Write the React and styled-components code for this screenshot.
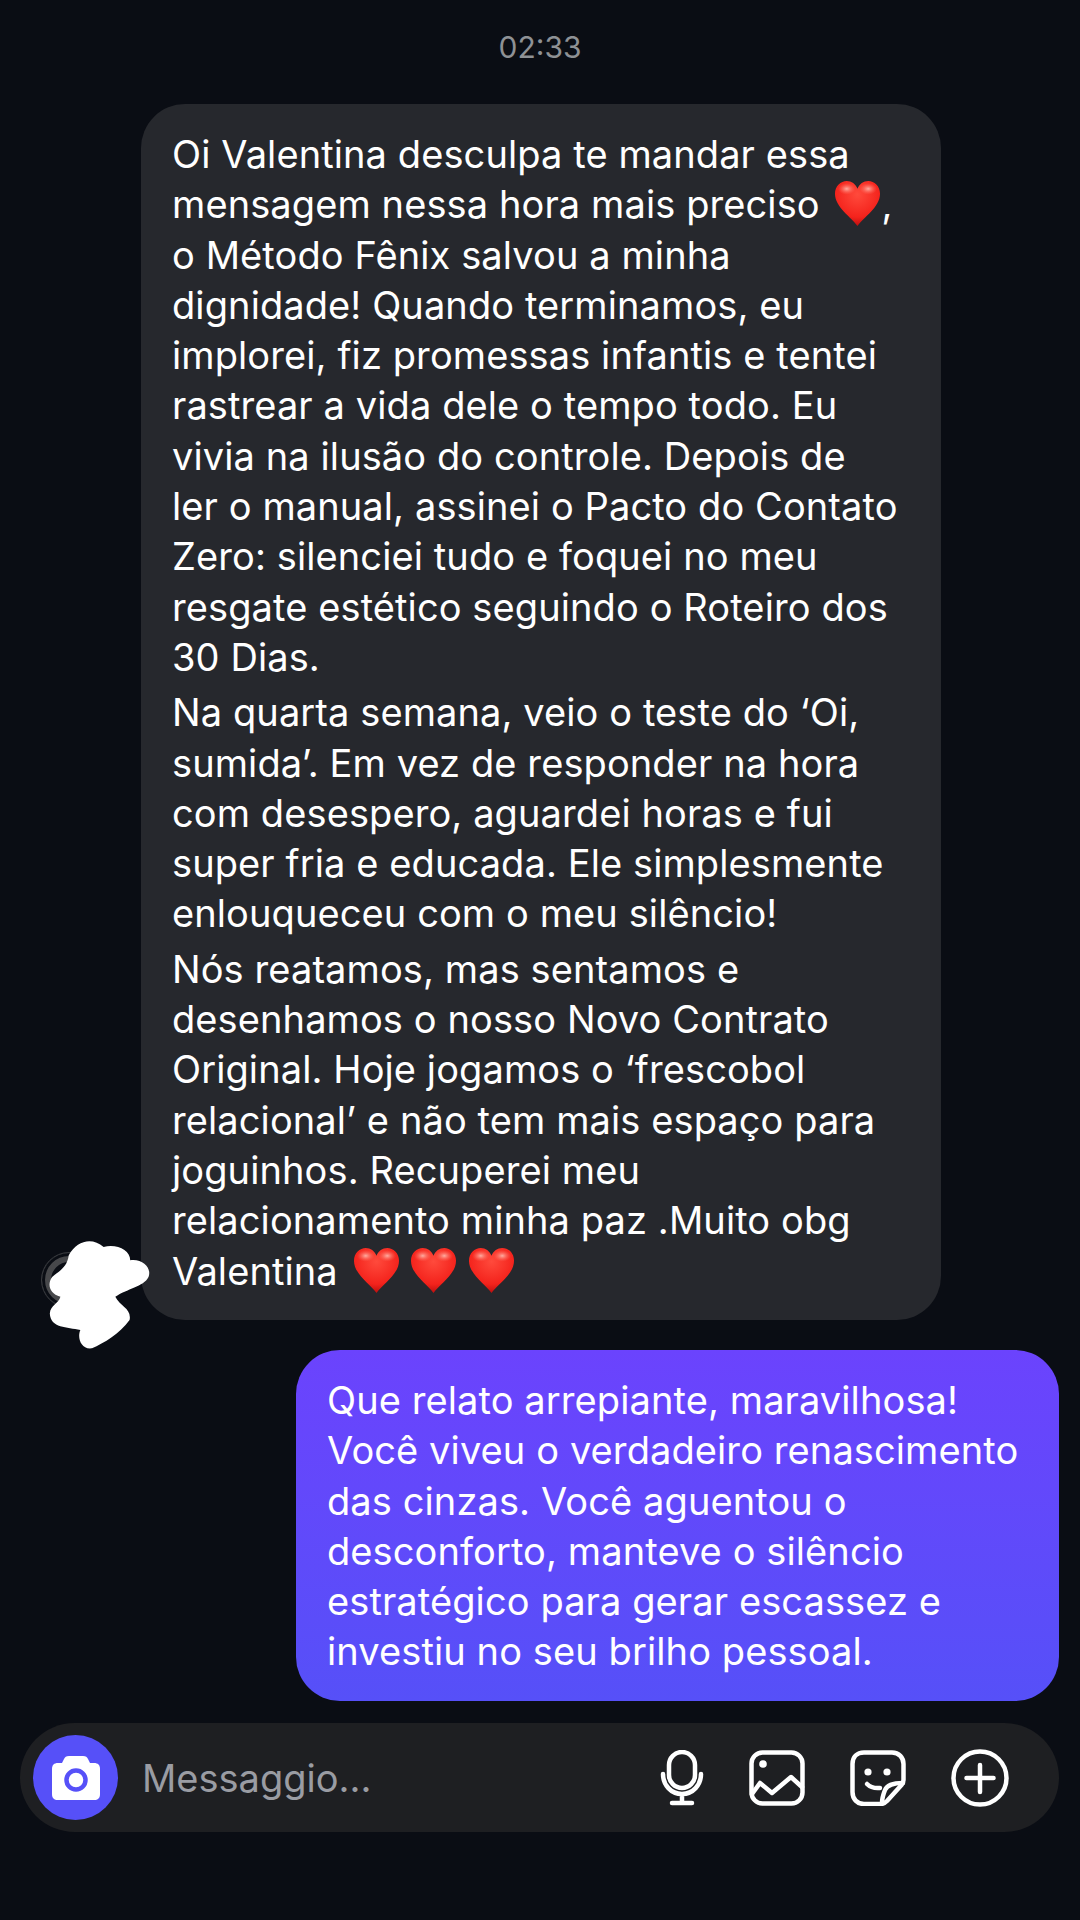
import styled, { createGlobalStyle } from 'styled-components'

const GlobalStyle = createGlobalStyle`
  html, body {
    margin: 0;
    padding: 0;
    background: #0a0d14;
  }
`

const received = [
  [
    'Oi Valentina desculpa te mandar essa',
    'mensagem nessa hora mais preciso @,',
    'o Método Fênix salvou a minha',
    'dignidade! Quando terminamos, eu',
    'implorei, fiz promessas infantis e tentei',
    'rastrear a vida dele o tempo todo. Eu',
    'vivia na ilusão do controle. Depois de',
    'ler o manual, assinei o Pacto do Contato',
    'Zero: silenciei tudo e foquei no meu',
    'resgate estético seguindo o Roteiro dos',
    '30 Dias.',
  ],
  [
    'Na quarta semana, veio o teste do ‘Oi,',
    'sumida’. Em vez de responder na hora',
    'com desespero, aguardei horas e fui',
    'super fria e educada. Ele simplesmente',
    'enlouqueceu com o meu silêncio!',
  ],
  [
    'Nós reatamos, mas sentamos e',
    'desenhamos o nosso Novo Contrato',
    'Original. Hoje jogamos o ‘frescobol',
    'relacional’ e não tem mais espaço para',
    'joguinhos. Recuperei meu',
    'relacionamento minha paz .Muito obg',
    'Valentina @ @ @',
  ],
]

const sent = [
  'Que relato arrepiante, maravilhosa!',
  'Você viveu o verdadeiro renascimento',
  'das cinzas. Você aguentou o',
  'desconforto, manteve o silêncio',
  'estratégico para gerar escassez e',
  'investiu no seu brilho pessoal.',
]

function Heart() {
  return (
    <HeartIcon viewBox="0 0 48 48">
      <defs>
        <radialGradient id="heartFill" cx="0.5" cy="0.3" r="0.72">
          <stop offset="0" stopColor="#ff4a3c" />
          <stop offset="0.7" stopColor="#f4231c" />
          <stop offset="1" stopColor="#b50d0e" />
        </radialGradient>
        <radialGradient id="heartShine" cx="0.5" cy="0.5" r="0.5">
          <stop offset="0" stopColor="#ffb4a8" stopOpacity="0.95" />
          <stop offset="1" stopColor="#ff6a5c" stopOpacity="0" />
        </radialGradient>
      </defs>
      <path
        fill="url(#heartFill)"
        d="M24 47C18 38 1 28 1 14 1 6 7 1 13 1c5 0 9 3 11 8 2-5 6-8 11-8 6 0 12 5 12 13 0 14-17 24-23 33z"
      />
      <ellipse cx="13" cy="9" rx="9" ry="6" fill="url(#heartShine)" />
      <ellipse cx="35" cy="9" rx="9" ry="6" fill="url(#heartShine)" />
    </HeartIcon>
  )
}

// '@' marks where a heart emoji sits in the line
function TextLine({ text }) {
  const parts = text.split('@')
  return (
    <Line>
      {parts.map((part, i) => (
        <span key={i}>
          {part}
          {i < parts.length - 1 && <Heart />}
        </span>
      ))}
    </Line>
  )
}

function Blob() {
  return (
    <BlobMark viewBox="80 170 315 340">
      <path
        fill="#fff"
        d="M145 225C170 180 215 170 250 200C290 190 330 210 330 240C370 235 395 265 385 290C370 320 320 325 285 350C300 380 335 385 328 420C300 460 250 490 215 505C180 510 170 470 180 450C140 440 90 445 88 400C90 375 115 370 120 350C85 340 80 310 95 290C120 270 140 260 145 225z"
      />
    </BlobMark>
  )
}

function App() {
  return (
    <Screen>
      <GlobalStyle />
      <Time>02:33</Time>
      <ReceivedRow>
        <Avatar />
        <Blob />
        <ReceivedBubble>
          {received.map((para, i) => (
            <Paragraph key={i}>
              {para.map((line) => (
                <TextLine key={line} text={line} />
              ))}
            </Paragraph>
          ))}
        </ReceivedBubble>
      </ReceivedRow>
      <SentRow>
        <SentBubble>
          {sent.map((line) => (
            <TextLine key={line} text={line} />
          ))}
        </SentBubble>
      </SentRow>
      <Composer>
        <CameraButton>
          <svg width="48" height="44" viewBox="0 0 48 44">
            <path
              fill="#fff"
              d="M17 0h14c3 0 4 1 5 3l2 4h4c4 0 6 2 6 6v25c0 4-2 6-6 6H6c-4 0-6-2-6-6V13c0-4 2-6 6-6h4l2-4c1-2 2-3 5-3z"
            />
            <circle cx="24" cy="24" r="9.5" fill="none" stroke="#5650f8" strokeWidth="4.5" />
          </svg>
        </CameraButton>
        <Placeholder>Messaggio...</Placeholder>
        <Actions>
          <svg width="44" height="56" viewBox="0 0 44 56" fill="none" stroke="#fff" strokeWidth="4.5" strokeLinecap="round">
            <rect x="9" y="2" width="26" height="36" rx="13" />
            <path d="M3 24c0 11 8 20 19 20s19-9 19-20M22 44v9M12 53h20" />
          </svg>
          <svg width="56" height="56" viewBox="0 0 56 56" fill="none" stroke="#fff" strokeWidth="4.5" strokeLinejoin="round" strokeLinecap="round">
            <rect x="2.5" y="2.5" width="51" height="51" rx="11" />
            <circle cx="14" cy="14" r="3.8" fill="#fff" stroke="none" />
            <path d="M3 44l8-11 12 10 19-16 11 10" />
          </svg>
          <svg width="56" height="56" viewBox="0 0 56 56" fill="none" stroke="#fff" strokeWidth="4.5" strokeLinecap="round" strokeLinejoin="round">
            <path d="M14 2.5h28c7 0 11.5 5 11.5 11.5v16c0 2-1 3.500-2 5L37 51c-2 2-4 3-6 3H14C7 54 2.500 49 2.500 42V14C2.500 7 7 2.500 14 2.500z" />
            <path d="M53 33c-8 0-16 2-18 7s-3 10-3 13" />
            <path d="M17 34c3 3 8 4.500 13 4" />
            <circle cx="18" cy="22" r="3.600" fill="#fff" stroke="none" />
            <circle cx="37" cy="22" r="3.600" fill="#fff" stroke="none" />
          </svg>
          <svg width="58" height="58" viewBox="0 0 58 58" fill="none" stroke="#fff" strokeWidth="4.5" strokeLinecap="round">
            <circle cx="29" cy="29" r="26.500" />
            <path d="M29 16v27M15.500 29h27" />
          </svg>
        </Actions>
      </Composer>
    </Screen>
  )
}

const Screen = styled.div`
  width: 1080px;
  height: 1920px;
  overflow: hidden;
  display: flex;
  flex-direction: column;
  background: #0a0d14;
  color: #fff;
  font-family: Inter, "Liberation Sans", sans-serif;
`

const Time = styled.div`
  height: 104px;
  padding-top: 29px;
  box-sizing: border-box;
  text-align: center;
  font-size: 30px;
  line-height: 36px;
  color: #8e9195;
`

const ReceivedRow = styled.div`
  position: relative;
  display: flex;
  padding-left: 141px;
`

const SentRow = styled.div`
  display: flex;
  justify-content: flex-end;
  padding: 30px 21px 0 0;
`

const ReceivedBubble = styled.div`
  box-sizing: border-box;
  width: 800px;
  height: 1216px;
  padding: 25px 20px 0 31px;
  border-radius: 44px;
  background: #26282d;
`

const SentBubble = styled.div`
  box-sizing: border-box;
  width: 763px;
  height: 351px;
  padding: 25px 20px 0 31px;
  border-radius: 44px;
  background: linear-gradient(180deg, #6b43fd 0%, #5650f8 100%);
`

const Paragraph = styled.div`
  margin-bottom: 5px;
`

const Line = styled.div`
  font-size: 38px;
  letter-spacing: 0.1px;
  line-height: 50.3px;
  white-space: nowrap;

  span:first-child svg {
    margin-left: 4px;
  }
`

const HeartIcon = styled.svg`
  display: inline-block;
  width: 47px;
  height: 47px;
  vertical-align: -9px;
`

const Avatar = styled.div`
  position: absolute;
  left: 41px;
  top: 1148px;
  width: 56px;
  height: 56px;
  box-sizing: border-box;
  border-radius: 50%;
  border: 1.5px solid #3a3c40;
  background: #0a0d14;
  box-shadow: inset 0 0 0 3px #0a0d14, inset 0 0 0 9px #47484b;
`

const BlobMark = styled.svg`
  position: absolute;
  left: 47px;
  top: 1133px;
  width: 105px;
  height: 113px;
  z-index: 2;
`

const Composer = styled.div`
  box-sizing: border-box;
  margin: 22px 21px 0 20px;
  height: 109px;
  padding: 0 50px 0 13px;
  display: flex;
  align-items: center;
  border-radius: 55px;
  background: #1e1f22;
`

const CameraButton = styled.div`
  width: 85px;
  height: 85px;
  flex: none;
  display: flex;
  align-items: center;
  justify-content: center;
  border-radius: 50%;
  background: #5650f8;
`

const Placeholder = styled.div`
  margin-left: 24px;
  flex: 1;
  font-size: 38px;
  color: #9a9ca3;
`

const Actions = styled.div`
  display: flex;
  align-items: center;
  gap: 45px;
`

export default App
